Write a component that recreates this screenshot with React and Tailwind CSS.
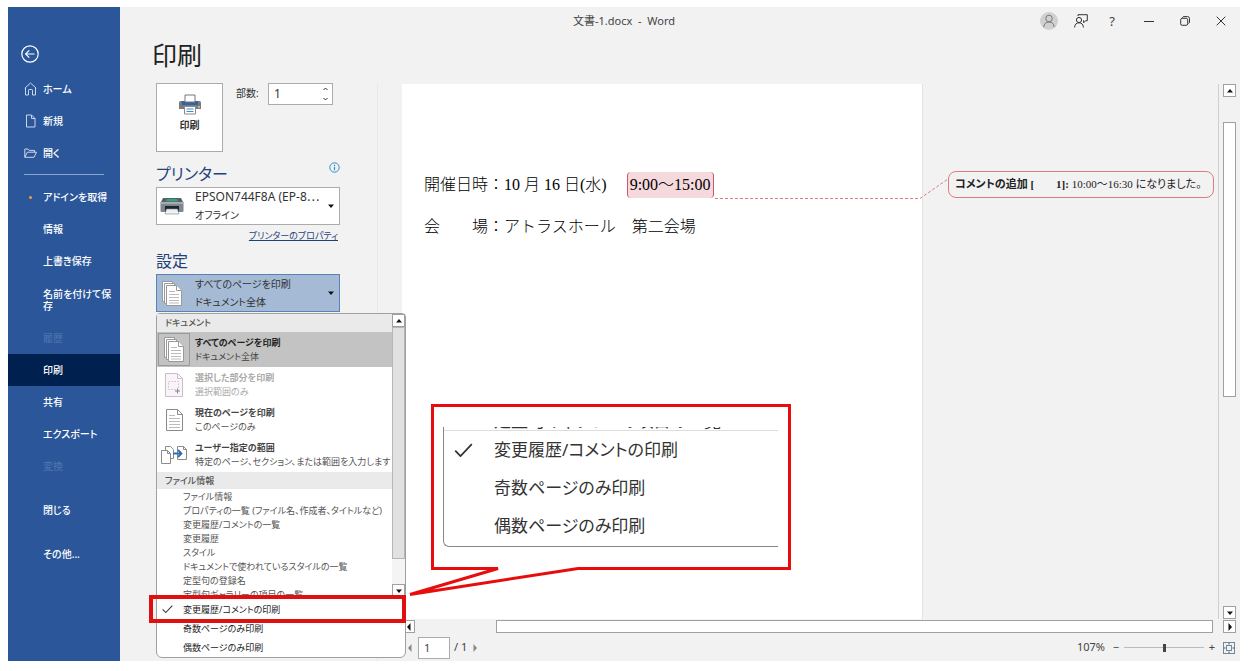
import { useState } from 'react';
import clsx from 'clsx';

const mainNav = [
  { label: 'アドインを取得', dot: true },
  { label: '情報' },
  { label: '上書き保存' },
  { label: '名前を付けて保存', tall: true },
  { label: '履歴', disabled: true },
  { label: '印刷', active: true },
  { label: '共有' },
  { label: 'エクスポート' },
  { label: '変換', disabled: true },
];

const infoItems = [
  ['ファイル情報', 'プロパティの一覧 (ファイル名、作成者、タイトルなど)'],
  ['変更履歴/コメントの一覧', '変更履歴'],
  ['スタイル', 'ドキュメントで使われているスタイルの一覧'],
  ['定型句の登録名', '定型句ギャラリーの項目の一覧'],
];

const rangeItems = [
  { title: 'すべてのページを印刷', sub: 'ドキュメント全体', icon: PagesIcon, selected: true },
  { title: '選択した部分を印刷', sub: '選択範囲のみ', icon: SelectionIcon, disabled: true },
  { title: '現在のページを印刷', sub: 'このページのみ', icon: PageIcon },
  { title: 'ユーザー指定の範囲', sub: '特定のページ、セクション、または範囲を入力します', icon: CustomIcon },
];

const filters = ['変更履歴/コメントの印刷', '奇数ページのみ印刷', '偶数ページのみ印刷'];

function BackIcon() {
  return (
    <svg width="18" height="18" viewBox="0 0 18 18" fill="none" stroke="#fff" strokeWidth="1.2">
      <circle cx="9" cy="9" r="8.2" />
      <path d="M13.5 9H4.8M8.3 5.3 4.6 9l3.7 3.7" />
    </svg>
  );
}

function HomeIcon() {
  return (
    <svg width="13" height="14" viewBox="0 0 13 14" fill="none" stroke="#c9d7ec">
      <path d="M.8 6.2 6.5 1l5.7 5.2M1.5 5.8v7.2h3V8.2q0-.7.7-.7h2.6q.7 0 .7.7V13h3V5.8" />
    </svg>
  );
}

function NewIcon() {
  return (
    <svg width="13" height="14" viewBox="0 0 13 14" fill="none" stroke="#c9d7ec">
      <path d="M2.5 1h5l3.500 3.500V13h-8.500zM7.500 1v3.500H11" />
    </svg>
  );
}

function OpenIcon() {
  return (
    <svg width="13" height="12" viewBox="0 0 13 12" fill="none" stroke="#c9d7ec">
      <path d="M.8 10.300V2h3.200l1.200 1.400h5.300v1.800M.8 10.300 3.300 5.200h9.200L10 10.300z" />
    </svg>
  );
}

function PrintIcon() {
  return (
    <svg width="22" height="21" viewBox="0 0 22 21">
      <path d="M0 8.500Q0 7 1.500 7h19Q22 7 22 8.500V15H0z" fill="#7a7a7a" />
      <path d="M3 7h16v4H3z" fill="#2f64a5" />
      <path d="M6 1h10v7H6z" fill="#fff" stroke="#777" />
      <path d="M5.500 12.500h11v7.500h-11z" fill="#fff" stroke="#8a8a8a" />
      <path d="M7.500 15h7M7.500 17.500h7" stroke="#3d8ccc" />
      <circle cx="20" cy="13" r=".8" fill="#fff" />
    </svg>
  );
}

function PrinterDeviceIcon() {
  return (
    <svg width="24" height="18" viewBox="0 0 24 18">
      <path d="M3 1h18l2 4H1z" fill="#55606a" />
      <path d="M7 2h10l1 2.500H6z" fill="#3aa276" />
      <path d="M.5 5h23v9q0 1-1 1h-21q-1 0-1-1z" fill="#7d8790" />
      <path d="M.5 5h23v2H.5z" fill="#a4adb4" />
      <path d="M5 9h14v6H5z" fill="#20262b" />
      <path d="M6.500 12h11l1.500 5H5z" fill="#eef1f3" stroke="#7d8790" strokeWidth=".6" />
    </svg>
  );
}

function PagesIcon() {
  return (
    <svg width="20" height="25" viewBox="0 0 20 25" fill="#fff" stroke="#999">
      <path d="M.5 .5h10v20H.5z" />
      <path d="M2.500 2.500h10v20h-10z" />
      <path d="M4.500 4.500h10l5 5v15h-15z" />
      <path d="M14.500 4.500v5h5" />
      <path d="M7 10.500h6M7 13.500h10M7 16.500h10M7 19.500h10M7 22h10" stroke="#bbb" />
    </svg>
  );
}

function SelectionIcon() {
  return (
    <svg width="18" height="24" viewBox="0 0 18 24" fill="#faf4fa" stroke="#c9bfc9">
      <path d="M.5 .5h12l5 5v18H.500zM12.500 .5v5h5" />
      <path d="M3.500 8.500h10v8h-10z" fill="none" strokeDasharray="1.500 1.500" />
      <path d="M12.500 15.500v5M10 18h5" stroke="#8d7f8d" />
    </svg>
  );
}

function PageIcon() {
  return (
    <svg width="17" height="22" viewBox="0 0 17 22" fill="#fff" stroke="#8b8b8b">
      <path d="M.5 .5h11l5 5v16H.500zM11.500 .5v5h5" />
      <path d="M3 6.500h6M3 9.500h11M3 12.500h11M3 15.500h11M3 18.500h11" stroke="#bbb" />
    </svg>
  );
}

function CustomIcon() {
  return (
    <svg width="27" height="18" viewBox="0 0 27 18" fill="#fff" stroke="#8b8b8b">
      <path d="M4.500 .5h5l3 3v9h-8z" />
      <path d="M.500 4.500h6l3 3v10h-9zM6.500 4.500v3h3" />
      <path d="M16.500 .5h6l3 3v10h-9zM22.500 .5v3h3" />
      <path d="M12 7.500h8M17 4l3.500 3.500L17 11" fill="none" stroke="#2f6fb5" strokeWidth="1.800" />
    </svg>
  );
}

function CheckIcon({ size = 11 }) {
  return (
    <svg width={size} height={size * 0.75} viewBox="0 0 16 12" fill="none" stroke="#333" strokeWidth="1.500">
      <path d="M1 6.500 5.500 11 15 1" />
    </svg>
  );
}

function Arrow({ dir, color = '#111' }) {
  const paths = {
    up: 'M1 5.500 4 2l3 3.500z',
    down: 'M1 2.500h6L4 6z',
    left: 'M5.500 0v8L2 4z',
    right: 'M2.500 0v8L6 4z',
  };
  return (
    <svg width="8" height="8" viewBox="0 0 8 8" fill={color}>
      <path d={paths[dir]} />
    </svg>
  );
}

function ScrollButton({ dir, label }) {
  return (
    <button aria-label={label} className="flex h-[13px] w-[13px] shrink-0 items-center justify-center border border-[#a0a0a0] bg-white">
      <Arrow dir={dir} />
    </button>
  );
}

function NavItem({ label, icon, dot, tall, active, disabled }) {
  return (
    <button
      disabled={disabled}
      className={clsx(
        'flex w-full shrink-0 items-center gap-[6px] pr-2 pl-4 text-left text-[10px] leading-3 font-medium',
        tall ? 'h-[45px]' : 'h-8',
        active && 'bg-[#002050]',
        disabled ? 'text-[#4a72ae]' : 'text-white'
      )}
    >
      <span className="flex w-[13px] shrink-0 justify-center">
        {icon}
        {dot && <span className="h-[3px] w-[3px] rounded-full bg-[#f0a030]" />}
      </span>
      <span>{label}</span>
    </button>
  );
}

function Sidebar() {
  return (
    <nav className="flex w-28 shrink-0 flex-col bg-[#2b579a]">
      <button aria-label="戻る" className="mt-[38px] mb-[10px] ml-[13px] h-[18px] w-[18px]">
        <BackIcon />
      </button>
      <NavItem label="ホーム" icon={<HomeIcon />} />
      <NavItem label="新規" icon={<NewIcon />} />
      <NavItem label="開く" icon={<OpenIcon />} />
      <hr className="mx-4 mt-[5px] mb-[6px] border-[#8ba6d0]" />
      {mainNav.map((item) => (
        <NavItem key={item.label} {...item} />
      ))}
      <div className="mt-3 flex flex-col gap-3">
        <NavItem label="閉じる" />
        <NavItem label="その他..." />
      </div>
    </nav>
  );
}

function TitleBar() {
  return (
    <header className="flex h-7 shrink-0 items-center text-[#444]">
      <div className="flex-1 pl-[88px] text-center text-[11px] whitespace-pre">文書-1.docx  -  Word</div>
      <div className="flex items-center pr-[14px]">
        <button aria-label="アカウント" className="flex h-[18px] w-[18px] items-center justify-center rounded-full bg-[#d0d0d0]">
          <svg width="12" height="14" viewBox="0 0 12 14" fill="none" stroke="#777">
            <circle cx="6" cy="4.500" r="3.300" />
            <path d="M.8 13q.6-5 5.200-5t5.200 5" />
          </svg>
        </button>
        <button aria-label="フィードバック" className="ml-4">
          <svg width="14" height="14" viewBox="0 0 14 14" fill="none" stroke="#333">
            <circle cx="5" cy="6" r="2.600" />
            <path d="M.6 13.500q.3-4.700 4.400-4.700t4.400 4.700M4 2V.7h9.300v6h-1.600l-2 2v-2H9" />
          </svg>
        </button>
        <button aria-label="ヘルプ" className="ml-5 w-2 text-[13px] leading-4">?</button>
        <button aria-label="最小化" className="ml-7 h-px w-[10px] bg-[#333]" />
        <button aria-label="元に戻す" className="ml-[26px]">
          <svg width="10" height="10" viewBox="0 0 10 10" fill="none" stroke="#333">
            <rect x=".7" y="2.300" width="7" height="7" rx="1.500" />
            <path d="M2.500 2V1.500Q3 .6 4 .6h3.500q2 0 2 2V6q0 1-1 1.500" />
          </svg>
        </button>
        <button aria-label="閉じる" className="ml-[26px]">
          <svg width="10" height="10" viewBox="0 0 10 10" stroke="#333">
            <path d="m.7.7 8.600 8.600M9.300.7.7 9.300" />
          </svg>
        </button>
      </div>
    </header>
  );
}

function DropButton({ icon, title, sub, open }) {
  return (
    <button
      aria-haspopup="listbox"
      className={clsx(
        'flex h-[38px] w-full items-center border text-left text-[#333]',
        open ? 'border-[#5b82b8] bg-[#a5bad5]' : 'border-[#ababab] bg-white'
      )}
    >
      <span className="flex w-[30px] shrink-0 justify-center">{icon}</span>
      <span className="min-w-0 flex-1 pl-2 text-[10px] leading-[18px] whitespace-nowrap">
        <span className={clsx('block', !open && 'text-xs leading-[18px]')}>{title}</span>
        <span className="block">{sub}</span>
      </span>
      <span className="pr-1">
        <Arrow dir="down" />
      </span>
    </button>
  );
}

function RangeMenu() {
  const [checked, setChecked] = useState(filters[0]);

  return (
    <div className="absolute top-[39px] left-0 z-10 w-[250px] rounded-b-md rounded-t-sm border border-[#a0a0a0] bg-white text-[9px] text-[#555]">
      <div className="flex h-[284px] border-b border-[#ddd]">
        <div className="min-w-0 flex-1 overflow-hidden whitespace-nowrap">
          <div className="h-[18px] bg-[#eaeaea] pl-2 leading-[18px] font-medium">ドキュメント</div>
          {rangeItems.map(({ title, sub, icon: Icon, selected, disabled }) => (
            <button
              key={title}
              disabled={disabled}
              className={clsx(
                'flex h-[35px] w-full items-center text-left leading-[14px]',
                selected && 'bg-[#c3c3c3] text-[#444]',
                disabled && 'text-[#aaa]'
              )}
            >
              <span
                className={clsx(
                  'ml-px flex h-[33px] w-8 shrink-0 items-center justify-center border',
                  selected ? 'border-[#9a9a9a]' : 'border-transparent'
                )}
              >
                <Icon />
              </span>
              <span className="pl-[5px]">
                <span className={clsx('block font-bold', selected && 'text-[#222]', !selected && !disabled && 'text-[#444]')}>
                  {title}
                </span>
                <span className="block">{sub}</span>
              </span>
            </button>
          ))}
          <div className="mb-px h-[17px] bg-[#eaeaea] pl-2 leading-[17px] font-medium">ファイル情報</div>
          {infoItems.map(([title, sub]) => (
            <button key={title} className="block w-full pl-[26px] text-left leading-[14px]">
              <span className="block">{title}</span>
              <span className="block">{sub}</span>
            </button>
          ))}
        </div>
        <div className="flex w-[13px] shrink-0 flex-col bg-[#f4f4f4]">
          <ScrollButton dir="up" label="上へスクロール" />
          <div className="mb-[25px] flex-1 border border-[#b5b5b5] bg-[#e1e1e1]" />
          <ScrollButton dir="down" label="下へスクロール" />
        </div>
      </div>
      <div className="pt-[2px]">
        {filters.map((label) => (
          <button
            key={label}
            role="menuitemcheckbox"
            aria-checked={checked === label}
            onClick={() => setChecked(label)}
            className="flex h-[19px] w-full items-center pl-[5px] text-left text-[#222]"
          >
            <span className="w-[21px]">{checked === label && <CheckIcon />}</span>
            {label}
          </button>
        ))}
      </div>
      <div className="pointer-events-none absolute top-[281px] -left-2 h-7 w-[257px] border-4 border-[#e01010]" />
    </div>
  );
}

function Settings() {
  const [copies, setCopies] = useState(1);

  return (
    <section className="mr-6 w-[258px] shrink-0 border-r border-[#e8e8e8] pr-[37px] pl-9">
      <div className="flex items-start">
        <button className="flex h-[69px] w-[67px] flex-col items-center border border-[#ababab] bg-white pt-[10px] text-[10px] font-bold text-[#333]">
          <PrintIcon />
          <span className="mt-[2px] leading-4">印刷</span>
        </button>
        <label htmlFor="copies" className="w-[45px] pl-[13px] text-[10px] leading-[21px] whitespace-nowrap text-[#333]">部数:</label>
        <div className="flex h-[22px] w-[65px] border border-[#ababab] bg-white">
          <input
            id="copies"
            value={copies}
            onChange={(e) => setCopies(Number(e.target.value) || 1)}
            className="w-full min-w-0 pl-[5px] text-xs text-[#333] outline-none"
          />
          <div className="flex w-[14px] shrink-0 flex-col">
            <button aria-label="増やす" className="flex flex-1 items-center justify-center" onClick={() => setCopies(copies + 1)}>
              <svg width="5" height="4" viewBox="0 0 5 4" fill="none" stroke="#333"><path d="M.5 3 2.500 1l2 2" /></svg>
            </button>
            <button aria-label="減らす" className="flex flex-1 items-center justify-center" onClick={() => setCopies(Math.max(1, copies - 1))}>
              <svg width="5" height="4" viewBox="0 0 5 4" fill="none" stroke="#333"><path d="M.5 1l2 2 2-2" /></svg>
            </button>
          </div>
        </div>
      </div>

      <div className="mt-[9px] flex h-[26px] justify-between">
        <h2 className="text-base leading-[26px] text-[#1e4279]">プリンター</h2>
        <svg className="mt-[1px]" width="11" height="11" viewBox="0 0 11 11" fill="none" stroke="#2f8fcb">
          <circle cx="5.500" cy="5.500" r="4.700" />
          <path d="M5.500 4.800v3.400M5.500 2.700v1.200" strokeWidth="1.200" />
        </svg>
      </div>
      <DropButton icon={<PrinterDeviceIcon />} title="EPSON744F8A (EP-8⋯" sub="オフライン" />
      <div className="flex h-6 items-start justify-end pt-1 pr-[2px]">
        <a href="#properties" className="text-[9px] leading-[14px] text-[#1e4279] underline">プリンターのプロパティ</a>
      </div>
      <h2 className="h-[25px] text-base leading-[25px] text-[#1e4279]">設定</h2>
      <div className="relative">
        <DropButton icon={<PagesIcon />} title="すべてのページを印刷" sub="ドキュメント全体" open />
        <RangeMenu />
      </div>
    </section>
  );
}

function Callout() {
  return (
    <div className="absolute top-[320px] left-[5px] z-20 h-[195px] w-[385px]">
      <svg className="absolute inset-0" width="385" height="195" viewBox="0 0 385 195">
        <path d="M25.500 2.500h357v163H171L3 191.500 91 165.500H25.500z" fill="#fff" stroke="#e80c0c" strokeWidth="3" />
      </svg>
      <div className="absolute top-[24px] left-9 h-[120px] w-[335px] overflow-hidden rounded-bl-md border-b border-l border-[#888] text-[17px] text-[#333]">
        <div className="relative h-[4px] overflow-hidden border-b border-[#ddd]">
          <div className="absolute bottom-0 left-[50px] leading-[18px] whitespace-nowrap">定型句ギャラリーの項目の一覧</div>
        </div>
        {filters.map((label, i) => (
          <div key={label} className="flex h-[38px] items-center pl-[10px] whitespace-nowrap">
            <span className="w-10">{i === 0 && <CheckIcon size={19} />}</span>
            {label}
          </div>
        ))}
      </div>
    </div>
  );
}

function Preview() {
  return (
    <section className="relative flex min-w-0 flex-1 flex-col pt-px">
      <div className="flex min-h-0 flex-1">
        <div className="flex min-w-0 flex-1 border-r border-[#cfcfcf]">
          <article className="w-[521px] shrink-0 border-r border-[#e3e3e3] bg-white pt-[88px] pl-[22px] font-['Liberation_Serif','Noto_Sans_CJK_JP',serif] text-base leading-[26px] font-light whitespace-pre text-black [font-feature-settings:normal]">
            <p>
              {'開催日時：10 月 16 日(水)　 '}
              <mark className="inline-block rounded-sm border-x border-[#c9566a] bg-[#f6d9dd] px-[2px] text-black">9:00～15:00</mark>
            </p>
            <p className="mt-4">会　　場：アトラスホール　第二会場</p>
          </article>
          <aside className="relative min-w-0 flex-1 pt-[87px] pr-1 pl-[25px]">
            <div className="flex h-[27px] items-center rounded-lg border border-[#dd7b83] pl-[6px] font-['Liberation_Serif','Noto_Sans_CJK_JP',serif] text-[11px] whitespace-pre text-[#222]">
              <b>コメントの追加 [　　1]:</b> 10:00～16:30 になりました。
            </div>
            <svg className="absolute top-[94px] -left-[208px]" width="234" height="22" viewBox="0 0 234 22" fill="none" stroke="#dd7b83" strokeDasharray="3 2">
              <path d="M0 20.500h205L233 1" />
            </svg>
          </aside>
        </div>
        <div className="flex w-[21px] flex-col items-center">
          <ScrollButton dir="up" label="上へ" />
          <div className="flex w-[13px] flex-1 flex-col pt-[25px] pb-[209px]">
            <div className="flex-1 border border-[#a0a0a0] bg-white" />
          </div>
          <ScrollButton dir="down" label="下へ" />
        </div>
      </div>
      <div className="flex h-[15px] items-center pr-1">
        <ScrollButton dir="left" label="左へ" />
        <div className="mr-[10px] ml-[81px] h-[13px] flex-1 border border-[#a0a0a0] bg-white" />
        <ScrollButton dir="right" label="右へ" />
      </div>
      <footer className="flex h-[27px] items-center pr-[5px] pl-1 text-[11px] text-[#444]">
        <button aria-label="前のページ"><Arrow dir="left" color="#888" /></button>
        <input aria-label="ページ" defaultValue="1" className="ml-1 h-[22px] w-8 border border-[#ababab] bg-white pl-[5px]" />
        <span className="ml-1">/ 1</span>
        <button aria-label="次のページ" className="ml-1"><Arrow dir="right" color="#888" /></button>
        <span className="ml-auto">107%</span>
        <button aria-label="縮小" className="ml-[6px] w-[10px]">−</button>
        <input
          type="range"
          aria-label="ズーム"
          min="10"
          max="200"
          defaultValue="107"
          className="mx-[3px] h-3 w-20 appearance-none bg-[linear-gradient(#bbb,#bbb)] bg-[length:100%_1px] bg-center bg-no-repeat [&::-webkit-slider-thumb]:h-2 [&::-webkit-slider-thumb]:w-[3px] [&::-webkit-slider-thumb]:appearance-none [&::-webkit-slider-thumb]:bg-[#444]"
        />
        <button aria-label="拡大" className="w-[10px]">+</button>
        <button aria-label="ページに合わせる" className="ml-[6px]">
          <svg width="12" height="12" viewBox="0 0 12 12" fill="none" stroke="#71879b">
            <rect x=".5" y=".5" width="11" height="11" />
            <rect x="3.500" y="3.500" width="5" height="5" />
            <path d="M6 0v2.500M6 9.500V12M0 6h2.500M9.500 6H12" strokeWidth="1.500" />
          </svg>
        </button>
      </footer>
      <Callout />
    </section>
  );
}

export default function App() {
  return (
    <div className="flex min-h-screen bg-white pt-[7px] pr-[9px] pb-[10px] pl-2 font-['Noto_Sans','Noto_Sans_CJK_JP',sans-serif] [font-feature-settings:'palt']">
      <Sidebar />
      <main className="flex min-w-0 flex-1 flex-col bg-[#f2f2f2]">
        <TitleBar />
        <h1 className="h-12 pl-8 text-[25px] leading-10 text-[#222]">印刷</h1>
        <div className="flex min-h-0 flex-1">
          <Settings />
          <Preview />
        </div>
      </main>
    </div>
  );
}
